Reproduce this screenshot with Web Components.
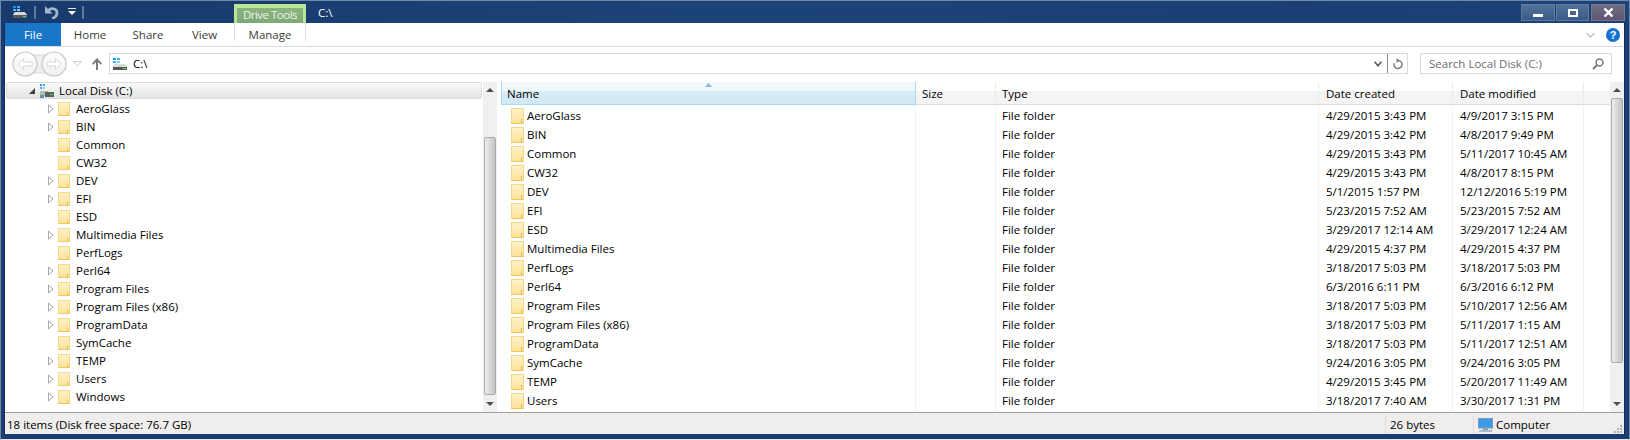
<!DOCTYPE html>
<html>
<head>
<meta charset="utf-8">
<title>C:\</title>
<style>
  html, body { margin: 0; padding: 0; background: #1a3c6e; }
  body { font: 11.5px "Open Sans", "Noto Sans", sans-serif; color: #000; overflow: hidden; }
</style>
</head>
<body>
<explorer-window>
  <title-bar></title-bar>
  <ribbon-tabs></ribbon-tabs>
  <nav-bar></nav-bar>
  <main-panes>
    <folder-tree></folder-tree>
    <file-list></file-list>
  </main-panes>
  <status-bar></status-bar>
</explorer-window>

<script>
// shared little drawing, used in the title bar and the address box
const DRIVE_SVG = `<svg width="14" height="12" viewBox="0 0 14 12">
  <rect x="0" y="0" width="3" height="2" fill="#1c9ae0"/><rect x="4" y="0" width="3" height="2" fill="#35b4ee"/>
  <rect x="0" y="3" width="3" height="2" fill="#35b4ee"/><rect x="4" y="3" width="3" height="2" fill="#7fd0f2"/>
  <path d="M2 6h9.500L14 8.500V9H0V8.500z" fill="#d8dada"/><rect x="0" y="9" width="14" height="3" fill="#55595a"/>
  <rect x="10" y="10" width="3" height="1" fill="#4fdc5a"/></svg>`;

class FolderIcon extends HTMLElement {
  connectedCallback() {
    const w = this.getAttribute('w') || 13;
    const h = this.getAttribute('h') || 16;
    this.attachShadow({ mode: 'open' });
    this.shadowRoot.innerHTML = `
      <style>:host { display: inline-block; flex: none; width: ${w}px; height: ${h}px; line-height: 0; }</style>
      <svg width="${w}" height="${h}" viewBox="0 0 13 16" preserveAspectRatio="none">
        <defs><linearGradient id="f" x1="0" y1="0" x2="0" y2="1"><stop offset="0" stop-color="#fff2c9"/><stop offset="1" stop-color="#fee2 97"/></linearGradient></defs>
        <rect x=".5" y=".5" width="12" height="15" fill="url(#f)" stroke="#f5d788"/>
        <path d="M10.500 11v4.500" stroke="#e8b94a" fill="none"/>
        <path d="M.5 15.500h12" stroke="#efc55c" fill="none"/>
      </svg>`.replace('#fee2 97', '#fee297');
  }
}
customElements.define('folder-icon', FolderIcon);

class TitleBar extends HTMLElement {
  connectedCallback() {
    this.attachShadow({ mode: 'open' });
    this.shadowRoot.innerHTML = `
      <style>
        :host { display: flex; height: 22px; align-items: flex-start; background: linear-gradient(90deg, #183a6c, #1c4378 45%, #1b3f74 80%, #1c4278); }
        .qat { display: flex; align-items: center; height: 22px; padding-left: 8px; width: 229px; box-sizing: border-box; flex: none; }
        .sep { width: 2px; height: 13px; background: #5d7a9f; }
        .drive { margin-right: 7px; line-height: 0; }
        .undo { margin: 0 9px 0 9px; line-height: 0; }
        .drop { margin-right: 6px; line-height: 0; }
        .ctx { width: 72px; height: 19px; margin-top: 3px; background: linear-gradient(#8ab47f, #7fa878); border: solid #b9e594; border-width: 4px 3px 0; box-sizing: border-box;
               color: #eef3e8; text-align: center; line-height: 14px; flex: none; white-space: nowrap; letter-spacing: -.5px; }
        .name { color: #fff; margin-left: 12px; margin-top: 3px; line-height: 17px; }
        .btns { margin-left: auto; margin-right: -1px; margin-top: 3px; display: flex; gap: 1px; }
        .btn { width: 34px; height: 17px; box-sizing: border-box; display: flex; align-items: center; justify-content: center; background: linear-gradient(#527296, #3a5b8a); border: 1px solid #5f7a9f; }
        .max { width: 33px; }
        .close { background: linear-gradient(#706b85, #5e5773); border-color: #7a7590; margin-left: 1px; }
      </style>
      <div class="qat">
        <span class="drive">${DRIVE_SVG}</span>
        <span class="sep"></span>
        <span class="undo"><svg width="14" height="14" viewBox="0 0 14 14"><path d="M0 1v7.500h7.500z" fill="#a3b6ce"/><path d="M3.500 5.500C6 2.500 12 3 12 8c0 2.500-2 4.500-5 5.500" fill="none" stroke="#a3b6ce" stroke-width="2.800"/></svg></span>
        <span class="drop"><svg width="8" height="8" viewBox="0 0 8 8"><rect y="0" width="8" height="1" fill="#dfe7f0"/><path d="M0 3h8L4 7z" fill="#fff"/></svg></span>
        <span class="sep"></span>
      </div>
      <div class="ctx">Drive Tools</div>
      <div class="name">C:\\</div>
      <div class="btns">
        <div class="btn"><svg width="10" height="3" style="margin-top:5px"><rect width="10" height="3" fill="#fff"/></svg></div>
        <div class="btn max"><svg width="10" height="8"><rect x="1" y="1" width="8" height="6" fill="none" stroke="#fff" stroke-width="2"/></svg></div>
        <div class="btn close"><svg width="11" height="9" viewBox="0 0 11 9"><path d="M1.500.5l8 8M9.500.5l-8 8" stroke="#fff" stroke-width="2.400"/></svg></div>
      </div>`;
  }
}
customElements.define('title-bar', TitleBar);

class RibbonTabs extends HTMLElement {
  connectedCallback() {
    this.attachShadow({ mode: 'open' });
    this.shadowRoot.innerHTML = `
      <style>
        :host { display: flex; height: 24px; background: #fff; border-bottom: 1px solid #dadbdc; box-sizing: border-box; line-height: 23px; color: #3b3b3b; }
        .file { width: 56px; background: #1a76c8; color: #fff; text-align: center; }
        .tab { width: 58px; text-align: center; }
        .manage { width: 72px; box-sizing: border-box; margin-left: 2px; height: 18px; line-height: 23px; border: solid #dadbdc; border-width: 0 1px; text-align: center; }
        .spacer { flex: 1; }
        .right { display: flex; align-items: center; padding-right: 4px; gap: 11px; }
      </style>
      <div class="file">File</div>
      <div class="tab">Home</div>
      <div class="tab">Share</div>
      <div class="tab" style="width:55px">View</div>
      <div class="manage">Manage</div>
      <div class="spacer"></div>
      <div class="right">
        <svg width="9" height="6" viewBox="0 0 9 6"><path d="M.5 1l4 4 4-4" fill="none" stroke="#b9bdc2" stroke-width="1.200"/></svg>
        <svg width="14" height="14" viewBox="0 0 14 14"><circle cx="7" cy="7" r="7" fill="#1473d0"/><text x="7" y="11" text-anchor="middle" font-family="Liberation Sans" font-weight="700" font-size="11" fill="#fff">?</text></svg>
      </div>`;
  }
}
customElements.define('ribbon-tabs', RibbonTabs);

class NavBar extends HTMLElement {
  connectedCallback() {
    this.attachShadow({ mode: 'open' });
    this.shadowRoot.innerHTML = `
      <style>
        :host { display: flex; height: 35px; background: #fff; align-items: center; box-sizing: border-box; padding: 0 0 2px 7px; }
        .arrows { line-height: 0; width: 97px; height: 28px; display: flex; align-items: center; flex: none; }
        .addr { flex: none; width: 1299px; height: 21px; box-sizing: border-box; border: 1px solid #d9d9d9; display: flex; align-items: center; padding-left: 3px; }
        .addr .path { margin-left: 6px; }
        .addr .tools { margin-left: auto; display: flex; align-items: center; height: 100%; }
        .div { width: 1px; height: 100%; background: #8a8a8a; margin: 0 5px; }
        .search { flex: none; width: 192px; height: 21px; margin-left: 12px; box-sizing: border-box; border: 1px solid #d9d9d9; display: flex; align-items: center; padding: 0 7px 0 8px; color: #6d6d6d; justify-content: space-between; }
      </style>
      <div class="arrows">
        <svg width="72" height="28" viewBox="0 0 72 28">
          <defs><linearGradient id="b" x1="0" y1="0" x2="0" y2="1"><stop offset="0" stop-color="#fff"/><stop offset="1" stop-color="#f0f0f0"/></linearGradient></defs>
          <path d="M13 5h29v18H13z" fill="#f0f0f0" stroke="#d8d8d8"/>
          <circle cx="13" cy="14" r="12" fill="url(#b)" stroke="#c8c8c8" stroke-width="1.200"/>
          <circle cx="42" cy="14" r="12" fill="url(#b)" stroke="#c8c8c8" stroke-width="1.200"/>
          <path d="M6 14l5.500-5.500V12H20v4h-8.500v3.500z" fill="#fff" stroke="#d8d8d8"/>
          <path d="M49 14l-5.500-5.500V12H35v4h8.500v3.500z" fill="#fff" stroke="#d8d8d8"/>
          <path d="M61.500 11.500h8l-4 4.500z" fill="#fff" stroke="#cfcfcf"/>
        </svg>
        <svg width="10" height="12" viewBox="0 0 10 12" style="margin-left:8px"><path d="M5 0L0 5.500l1.300 1.300L4 4v8h2V4l2.700 2.800L10 5.500z" fill="#7b7b7b"/></svg>
      </div>
      <div class="addr">
        ${DRIVE_SVG}
        <span class="path">C:\\</span>
        <span class="tools">
          <svg width="8" height="6" viewBox="0 0 8 6"><path d="M.5.700L4 4.700 7.500.700" fill="none" stroke="#555" stroke-width="1.600"/></svg>
          <span class="div"></span>
          <svg width="10" height="12" viewBox="0 0 10 12" style="margin-right:4px"><path d="M5 2.500a4 4 0 1 1-3.800 2.800" fill="none" stroke="#808080" stroke-width="1.500"/><path d="M3.500 0l3.500 2.500L3.500 5z" fill="#808080"/></svg>
        </span>
      </div>
      <div class="search">
        <span>Search Local Disk (C:)</span>
        <svg width="12" height="12" viewBox="0 0 12 12"><circle cx="7.500" cy="4.500" r="3.400" fill="none" stroke="#7a7a7a" stroke-width="1.500"/><path d="M5 7L1 11" stroke="#7a7a7a" stroke-width="2"/></svg>
      </div>`;
  }
}
customElements.define('nav-bar', NavBar);

class MainPanes extends HTMLElement {
  connectedCallback() {
    this.attachShadow({ mode: 'open' });
    this.shadowRoot.innerHTML = `
      <style>:host { display: flex; height: 330px; background: #fff; overflow: hidden; }</style>
      <slot></slot>`;
  }
}
customElements.define('main-panes', MainPanes);

class ScrollTrack extends HTMLElement {
  connectedCallback() {
    // thumb position comes from the attributes, px below the up arrow
    const top = this.getAttribute('thumb-top');
    const h = this.getAttribute('thumb-height');
    this.attachShadow({ mode: 'open' });
    this.shadowRoot.innerHTML = `
      <style>
        :host { display: flex; flex-direction: column; flex: none; width: 14px; background: #f0f0f0; height: 100%; box-sizing: border-box; align-items: center; }
        .arrow { height: 0; flex: none; border: 4px solid transparent; }
        .up { border-bottom-color: #505050; margin-top: 2px; }
        .thumb { width: 12px; flex: none; box-sizing: border-box; border: 1px solid #a9a9a9; border-radius: 2px; background: linear-gradient(90deg, #eee, #d9d9d9 50%, #c4c4c4); }
        .gap { flex: 1; }
        .down { border-top-color: #505050; margin-bottom: 2px; }
      </style>
      <div class="arrow up"></div>
      <div style="height:${top}px;flex:none"></div>
      <div class="thumb" style="height:${h}px"></div>
      <div class="gap"></div>
      <div class="arrow down"></div>`;
  }
}
customElements.define('scroll-track', ScrollTrack);

class FolderTree extends HTMLElement {
  connectedCallback() {
    const rows = [['AeroGlass',1],['BIN',1],['Common',0],['CW32',0],['DEV',1],['EFI',1],['ESD',0],
      ['Multimedia Files',1],['PerfLogs',0],['Perl64',1],['Program Files',1],['Program Files (x86)',1],
      ['ProgramData',1],['SymCache',0],['TEMP',1],['Users',1],['Windows',1]];
    const html = rows.map(([n, kids]) => `
      <div class="row">
        <span class="exp">${kids ? '<svg width="6" height="10" viewBox="0 0 6 10"><path d="M.5 1l4.500 4-4.500 4z" fill="#fff" stroke="#a6a6a6"/></svg>' : ''}</span>
        <folder-icon w="12" h="14"></folder-icon><span class="t">${n}</span>
      </div>`).join('');
    this.attachShadow({ mode: 'open' });
    this.shadowRoot.innerHTML = `
      <style>
        :host { display: flex; flex: none; width: 492px; height: 100%; }
        .tree { flex: 1; padding-left: 1px; min-width: 0; }
        .head { height: 17px; box-sizing: border-box; width: 476px; border: 1px solid #dcdcdc; border-radius: 2px; background: linear-gradient(#fbfbfb, #e3e3e3); display: flex; align-items: center; padding-left: 22px; margin-bottom: 1px; }
        .head .t { margin-left: 5px; margin-bottom: 0; }
        .row { display: flex; align-items: center; height: 18px; padding-left: 42px; }
        .exp { width: 10px; flex: none; line-height: 0; }
        .t { margin-left: 6px; margin-bottom: 2px; white-space: nowrap; }
      </style>
      <div class="tree">
        <div class="head">
          <svg width="6" height="6" viewBox="0 0 6 6"><path d="M6 0v6H0z" fill="#404040"/></svg>
          <svg width="15" height="14" viewBox="0 0 15 14" style="margin-left:4px">
            <rect x="1" y="0" width="2" height="2" fill="#1c9ae0"/><rect x="4" y="0" width="2" height="2" fill="#35b4ee"/>
            <rect x="1" y="3" width="2" height="2" fill="#35b4ee"/><rect x="4" y="3" width="2" height="2" fill="#7fd0f2"/>
            <path d="M1 7h8v5H1z" fill="#a9c2a8"/><path d="M1 11h4v3H1z" fill="#5d8fb8"/>
            <rect x="6" y="8" width="9" height="5" fill="#5b5f5f"/><rect x="11" y="10" width="3" height="1" fill="#4fdc5a"/>
          </svg>
          <span class="t">Local Disk (C:)</span>
        </div>
        ${html}
      </div>
      <scroll-track thumb-top="45" thumb-height="258"></scroll-track>`;
  }
}
customElements.define('folder-tree', FolderTree);

class FileList extends HTMLElement {
  connectedCallback() {
    const rows = [
      ['AeroGlass','4/29/2015 3:43 PM','4/9/2017 3:15 PM'],
      ['BIN','4/29/2015 3:42 PM','4/8/2017 9:49 PM'],
      ['Common','4/29/2015 3:43 PM','5/11/2017 10:45 AM'],
      ['CW32','4/29/2015 3:43 PM','4/8/2017 8:15 PM'],
      ['DEV','5/1/2015 1:57 PM','12/12/2016 5:19 PM'],
      ['EFI','5/23/2015 7:52 AM','5/23/2015 7:52 AM'],
      ['ESD','3/29/2017 12:14 AM','3/29/2017 12:24 AM'],
      ['Multimedia Files','4/29/2015 4:37 PM','4/29/2015 4:37 PM'],
      ['PerfLogs','3/18/2017 5:03 PM','3/18/2017 5:03 PM'],
      ['Perl64','6/3/2016 6:11 PM','6/3/2016 6:12 PM'],
      ['Program Files','3/18/2017 5:03 PM','5/10/2017 12:56 AM'],
      ['Program Files (x86)','3/18/2017 5:03 PM','5/11/2017 1:15 AM'],
      ['ProgramData','3/18/2017 5:03 PM','5/11/2017 12:51 AM'],
      ['SymCache','9/24/2016 3:05 PM','9/24/2016 3:05 PM'],
      ['TEMP','4/29/2015 3:45 PM','5/20/2017 11:49 AM'],
      ['Users','3/18/2017 7:40 AM','3/30/2017 1:31 PM']
    ];
    const body = rows.map(r => `
      <div class="row">
        <div class="c name"><folder-icon></folder-icon><span>${r[0]}</span></div>
        <div class="c"></div>
        <div class="c type">File folder</div>
        <div class="c">${r[1]}</div>
        <div class="c">${r[2]}</div>
      </div>`).join('');
    // the 17th row only peeks out under the fold: just the top of its folder shows
    const peek = `
      <div class="row">
        <div class="c name"><folder-icon></folder-icon></div>
        <div class="c"></div><div class="c"></div><div class="c"></div><div class="c"></div>
      </div>`;
    this.attachShadow({ mode: 'open' });
    this.shadowRoot.innerHTML = `
      <style>
        :host { display: flex; flex: 1; min-width: 0; height: 100%; padding-left: 4px; box-sizing: border-box; }
        .wrap { flex: 1; min-width: 0; overflow: hidden; }
        .grid, .row { display: grid; grid-template-columns: 415px 80px 323px 134px 131px; }
        .hd { height: 23px; box-sizing: border-box; border-bottom: 1px solid #dcdcdc; background: linear-gradient(#fff 0, #fff 9px, #f4f4f4 9px, #f4f4f4); }
        .hd .grid { height: 22px; }
        .h { box-sizing: border-box; padding: 3px 0 0 7px; height: 22px; line-height: 17px; border-right: 1px solid #ececec; }
        .h.narrow { padding-left: 6px; }
        .h.sel { background: linear-gradient(#f0f8fb 0, #f0f8fb 9px, #d9ecf6 9px, #d2e8f4); border-right: 1px solid #a6d8f4; border-left: 1px solid #a6d8f4; box-shadow: 0 1px 0 #a6d8f4; padding-left: 5px; position: relative; }
        .sort { position: absolute; left: 203px; top: 1px; line-height: 0; }
        .rows { padding-top: 1px; }
        .row { height: 19px; align-items: stretch; }
        .c { box-sizing: border-box; padding-left: 7px; line-height: 19px; border-right: 1px solid #edf2fa; white-space: nowrap; overflow: hidden; }
        .type { padding-left: 6px; }
        .name { display: flex; align-items: center; padding-left: 10px; gap: 3px; }
      </style>
      <div class="wrap">
        <div class="hd">
          <div class="grid">
            <div class="h sel">Name<span class="sort"><svg width="7" height="4" viewBox="0 0 7 4"><path d="M3.500 0L7 4H0z" fill="#8fb8d4"/></svg></span></div>
            <div class="h narrow">Size</div>
            <div class="h narrow">Type</div>
            <div class="h">Date created</div>
            <div class="h">Date modified</div>
          </div>
        </div>
        <div class="rows">${body}${peek}</div>
      </div>
      <scroll-track thumb-top="6" thumb-height="265"></scroll-track>`;
  }
}
customElements.define('file-list', FileList);

class StatusBar extends HTMLElement {
  connectedCallback() {
    this.attachShadow({ mode: 'open' });
    this.shadowRoot.innerHTML = `
      <style>
        :host { display: flex; height: 22px; box-sizing: border-box; background: #f0eded; border-top: 1px solid #a0a0a0; padding-top: 2px; align-items: center; line-height: 19px; }
        .count { padding-left: 2px; flex: none; width: 1380px; box-sizing: border-box; }
        .cell { box-sizing: border-box; border-left: 1px solid #dcdcdc; height: 100%; flex: none; display: flex; align-items: center; }
        .bytes { width: 88px; padding-left: 4px; }
        .comp { flex: 1; padding-left: 4px; gap: 3px; }
        .grip { margin-left: auto; line-height: 0; margin-right: 1px; margin-top: 9px; }
      </style>
      <div class="count">18 items (Disk free space: 76.7 GB)</div>
      <div class="cell bytes">26 bytes</div>
      <div class="cell comp">
        <svg width="15" height="14" viewBox="0 0 15 14"><rect x=".5" y=".5" width="14" height="9.500" fill="#3d9be6" stroke="#7a9cb8"/><rect x="5" y="10.500" width="5" height="1.500" fill="#8a99a8"/><rect x="1" y="12" width="13" height="2" fill="#a9bccc"/></svg>
        <span>Computer</span>
        <svg class="grip" width="9" height="9" viewBox="0 0 9 9" fill="#b0b0b0"><rect x="6" y="0" width="2" height="2"/><rect x="3" y="3" width="2" height="2"/><rect x="6" y="3" width="2" height="2"/><rect x="0" y="6" width="2" height="2"/><rect x="3" y="6" width="2" height="2"/><rect x="6" y="6" width="2" height="2"/></svg>
      </div>`;
  }
}
customElements.define('status-bar', StatusBar);

class ExplorerWindow extends HTMLElement {
  constructor() {
    super();
    this.attachShadow({ mode: 'open' }).innerHTML = `
      <style>
        :host { display: block; width: 1630px; height: 440px; box-sizing: border-box; background: #1a3c6e; border: 1px solid #6f8aa8; border-bottom-color: #e6e6e6; overflow: hidden; }
        .inner { margin: 0 5px 0 4px; }
        ::slotted(title-bar) { margin: 0 -5px 0 -4px; padding: 0 5px 0 4px; }
        ::slotted(:not(title-bar)) { box-shadow: -1px 0 0 #0f2c58, 1px 0 0 #0f2c58; }
      </style>
      <div class="inner"><slot></slot></div>`;
  }
}
customElements.define('explorer-window', ExplorerWindow);
</script>
</body>
</html>
